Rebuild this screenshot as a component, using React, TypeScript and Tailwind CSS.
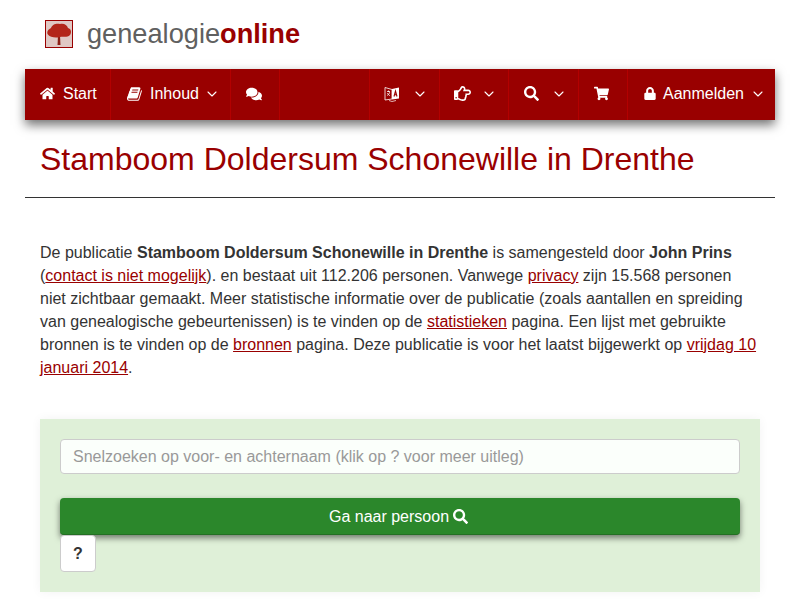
import React from 'react';
import {
  FaHome,
  FaComments,
  FaRegHandPointRight,
  FaSearch,
  FaShoppingCart,
  FaLock,
} from 'react-icons/fa';
import { LuChevronDown } from 'react-icons/lu';

const Chevron = () => <LuChevronDown strokeWidth={1.6} className="w-[16px] h-[16px]" />;

const Logo = () => (
  <div className="w-[28px] h-[28px] border border-[#990000] bg-[#e0c8c4]">
    <svg viewBox="0 0 26 26" className="w-full h-full">
      <path d="M11.5 24 L12 15 L14 15 L14.5 24 Z" fill="#8c2016" />
      <path
        d="M1.5 13 C0.5 10 3 8 5 7 C6 3 11 2 14 3 C18 2 21 4 22 7 C25 8 26 11 24 14 C21 17 17 15 14 16 C11 17 4 17 1.5 13 Z"
        fill="#b3261a"
      />
    </svg>
  </div>
);

// font awesome 4 book, the react-icons one is not slanted
const BookIcon = () => (
  <svg viewBox="0 0 1792 1792" className="w-[16px] h-[16px] mr-[7px]" fill="currentColor">
    <path d="M1639 478q40 57 18 129l-275 906q-19 64-76.5 107.5t-122.5 43.5h-923q-77 0-148.5-53.5t-99.5-131.5q-24-67-2-127 0-4 3-27t4-37q1-8-3-21.5t-3-19.5q2-11 8-21t16.5-23.5 16.5-23.5q23-38 45-91.5t30-91.5q3-10 .5-30t-.5-28q3-11 17-28t17-23q21-36 42-92t25-90q1-9-2.5-32t.5-28q4-13 22-30.5t22-22.5q19-26 42.5-84.5t27.5-96.5q1-8-3-25.5t-2-26.5q2-8 9-18t18-23 17-21q8-12 16.5-30.5t15-35 16-36 19.5-32 26.5-23.5 36-11.5 47.5 5.5l-1 3q38-9 51-9h761q74 0 114 56t18 130l-274 906q-36 119-71.5 153.5t-128.5 34.5h-869q-27 0-38 15-11 16-1 43 24 70 144 70h923q29 0 56-15.5t35-41.5l300-987q7-22 5-57 38 15 59 43zm-1064 2q-4 13 2 22.5t20 9.5h608q13 0 25.5-9.5t16.5-22.5l21-64q4-13-2-22.5t-20-9.5h-608q-13 0-25.5 9.5t-16.5 22.5zm-83 256q-4 13 2 22.5t20 9.5h608q13 0 25.5-9.5t16.5-22.5l21-64q4-13-2-22.5t-20-9.5h-608q-13 0-25.5 9.5t-16.5 22.5z" />
  </svg>
);

const LanguageIcon = () => (
  <svg viewBox="0 0 16 16" className="w-[16px] h-[16px]">
    <path d="M1 1.5 L8 3.5 L8 13 L1 14 Z" fill="none" stroke="#fff" strokeWidth="0.8" />
    <path d="M8 3 L15 1.5 L15 12.5 L8 13.5 Z" fill="#fff" />
    <path d="M3 5.5 L6 5.5 M4.5 4.5 L4.5 6 M3.2 9.5 C5 8.5 5.5 7 5.7 6 M3.5 7 C4 8.5 5 9.5 6 9.5" fill="none" stroke="#fff" strokeWidth="0.8" />
    <path d="M10 10.5 L11.5 5 L13 10.5 M10.6 8.8 L12.4 8.8" fill="none" stroke="#990000" strokeWidth="1.1" />
    <path d="M5 14.5 L8 15.5 L12 14.5" fill="none" stroke="#fff" strokeWidth="0.7" />
  </svg>
);

const NavItem = ({ className, children }: { className: string; children: React.ReactNode }) => (
  <div className={`flex items-center h-full pb-[2px] border-r border-[#b30000] ${className}`}>{children}</div>
);

export default function App() {
  return (
    <div className="w-[800px] h-[600px] overflow-hidden bg-white text-[16px] leading-[23px] text-[#333333] font-['Liberation_Sans',Arial,sans-serif]">
      <div className="flex items-center h-[69px] pl-[45px] pb-[1px]">
        <Logo />
        <div className="ml-[14px] text-[27.2px] leading-[30px] text-[#606060]">
          genealogie<b className="text-[#990000]">online</b>
        </div>
      </div>

      <nav className="mx-[25px] h-[51px] flex items-center bg-[#990000] text-white shadow-[0_5px_10px_rgba(0,0,0,0.55)]">
        <NavItem className="w-[86px] pl-[15px]">
          <FaHome className="w-[15px] h-[15px] mr-[8px]" />
          Start
        </NavItem>
        <NavItem className="w-[120px] pl-[16px] gap-[5px]">
          <span className="flex items-center">
            <BookIcon />
            Inhoud
          </span>
          <Chevron />
        </NavItem>
        <NavItem className="w-[49px] pl-[15px]">
          <FaComments className="w-[16px] h-[16px]" />
        </NavItem>
        <div className="w-[90px] h-full border-r border-[#b30000]" />
        <NavItem className="w-[70px] pl-[14px] gap-[12px]">
          <LanguageIcon />
          <Chevron />
        </NavItem>
        <NavItem className="w-[69px] pl-[14px] gap-[10px]">
          <FaRegHandPointRight className="w-[17px] h-[17px]" />
          <Chevron />
        </NavItem>
        <NavItem className="w-[70px] pl-[15px] gap-[12px]">
          <FaSearch className="w-[15px] h-[15px]" />
          <Chevron />
        </NavItem>
        <NavItem className="w-[49px] pl-[15px]">
          <FaShoppingCart className="w-[15px] h-[15px]" />
        </NavItem>
        <div className="flex items-center h-full pb-[2px] pl-[16px] gap-[6px]">
          <span className="flex items-center">
            <FaLock className="w-[12px] h-[13px] mr-[7px]" />
            Aanmelden
          </span>
          <Chevron />
        </div>
      </nav>

      <div className="mx-[25px] h-[78px] border-b border-[#333333] px-[15px] pt-[20px]">
        <h1 className="text-[32px] leading-[38px] text-[#990000]">Stamboom Doldersum Schonewille in Drenthe</h1>
      </div>

      <p className="mx-[40px] mt-[43px] w-[720px]">
        De publicatie <b>Stamboom Doldersum Schonewille in Drenthe</b> is samengesteld door <b>John Prins</b> (
        <a className="text-[#990000] underline">contact is niet mogelijk</a>). en bestaat uit 112.206 personen. Vanwege{' '}
        <a className="text-[#990000] underline">privacy</a> zijn 15.568 personen niet zichtbaar gemaakt. Meer statistische
        informatie over de publicatie (zoals aantallen en spreiding van genealogische gebeurtenissen) is te vinden op de{' '}
        <a className="text-[#990000] underline">statistieken</a> pagina. Een lijst met gebruikte bronnen is te vinden op de{' '}
        <a className="text-[#990000] underline">bronnen</a> pagina. Deze publicatie is voor het laatst bijgewerkt op{' '}
        <a className="text-[#990000] underline">vrijdag 10 januari 2014</a>.
      </p>

      <div className="mx-[40px] mt-[40px] h-[173px] bg-[#dff0d8] px-[20px] pt-[20px] shadow-[0_0_10px_rgba(0,0,0,0.05)]">
        <input
          readOnly
          placeholder="Snelzoeken op voor- en achternaam (klik op ? voor meer uitleg)"
          className="block w-full h-[35px] px-[12px] rounded-[4px] border border-[#cccccc] bg-[#fbfffb] text-[16px] placeholder:text-[#999999] outline-none"
        />
        <button className="flex items-center justify-center w-full h-[37px] mt-[24px] pr-[3px] rounded-[4px] bg-[#2b872b] border-b border-[#246f24] text-white shadow-[0_3px_6px_rgba(0,0,0,0.5)]">
          Ga naar persoon
          <FaSearch className="ml-[4px] w-[15px] h-[15px]" />
        </button>
        <button className="block w-[36px] h-[37px] rounded-[4px] bg-white border border-[#cccccc] font-bold">?</button>
      </div>
    </div>
  );
}
